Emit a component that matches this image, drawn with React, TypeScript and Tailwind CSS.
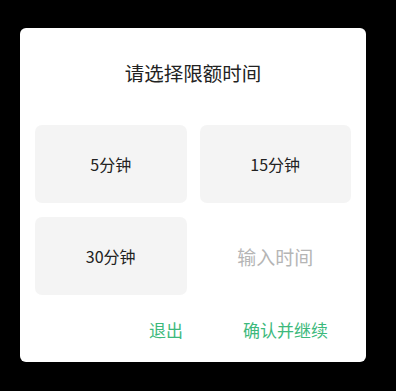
import React, { useState } from 'react';

const options = ['5分钟', '15分钟', '30分钟'];

const App: React.FC = () => {
  const [value, setValue] = useState('');

  return (
    <div
      className="w-[396px] h-[391px] bg-black pt-[28px] pl-[20px]"
      style={{ fontFamily: '"Noto Sans CJK SC", Roboto, "Noto Sans", sans-serif' }}
    >
      <div className="w-[346px] h-[334px] bg-white rounded-[6px] flex flex-col">
        <div className="pt-[32px] h-[97px] text-center text-[19.5px] leading-[26px] text-[#222]">
          请选择限额时间
        </div>

        {/* Options */}
        <div className="grid grid-cols-2 gap-x-[13px] gap-y-[14px] px-[15px]">
          {options.map((opt) => (
            <button
              key={opt}
              className="h-[78px] rounded-[7px] bg-[#f4f4f4] flex items-center justify-center text-[16px] text-[#222]"
            >
              {opt}
            </button>
          ))}
          <input
            value={value}
            onChange={(e) => setValue(e.target.value)}
            placeholder="输入时间"
            className="h-[78px] w-full text-center text-[19px] text-[#222] placeholder:text-[#b5b5b5] outline-none bg-transparent"
          />
        </div>

        {/* Actions */}
        <div className="flex justify-end items-center gap-[60px] pr-[38px] mt-[22px] h-[26px] text-[17px] text-[#3db97c]">
          <button>退出</button>
          <button>确认并继续</button>
        </div>
      </div>
    </div>
  );
};

export default App;
